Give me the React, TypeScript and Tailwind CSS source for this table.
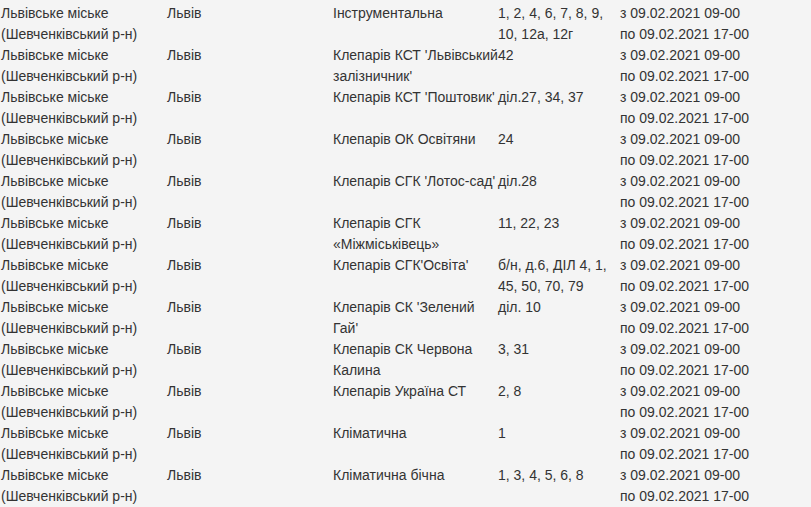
const ROW = { org: 'Львівське міське (Шевченківський р-н)', city: 'Львів' };

const STREETS: [string, string][] = [
  ['Інструментальна', '1, 2, 4, 6, 7, 8, 9, 10, 12а, 12г'],
  ["Клепарів КСТ 'Львівський залізничник'", '42'],
  ["Клепарів КСТ 'Поштовик'", 'діл.27, 34, 37'],
  ['Клепарів ОК Освітяни', '24'],
  ["Клепарів СГК 'Лотос-сад'", 'діл.28'],
  ['Клепарів СГК «Міжміськівець»', '11, 22, 23'],
  ["Клепарів СГК'Освіта'", 'б/н, д.6, ДІЛ 4, 1, 45, 50, 70, 79'],
  ["Клепарів СК 'Зелений Гай'", 'діл. 10'],
  ['Клепарів СК Червона Калина', '3, 31'],
  ['Клепарів Україна СТ', '2, 8'],
  ['Кліматична', '1'],
  ['Кліматична бічна', '1, 3, 4, 5, 6, 8'],
];

export default function App() {
  return (
    <div className="min-h-screen bg-[#f4f4f4] text-[#333] text-[14px] leading-[21px] font-['Liberation_Sans',Arial,sans-serif] overflow-hidden">
      <table className="table-fixed border-collapse ml-px mt-[3px]">
        <colgroup>
          <col className="w-[166px]" />
          <col className="w-[166px]" />
          <col className="w-[165px]" />
          <col className="w-[122px]" />
          <col className="w-[190px]" />
        </colgroup>
        <tbody>
          {STREETS.map(([street, houses], i) => (
            <tr key={i} className="align-top">
              <td className="p-0">{ROW.org}</td>
              <td className="p-0">{ROW.city}</td>
              <td className="p-0">{street}</td>
              <td className="p-0">{houses}</td>
              <td className="p-0 whitespace-nowrap">
                з 09.02.2021 09-00
                <br />
                по 09.02.2021 17-00
              </td>
            </tr>
          ))}
        </tbody>
      </table>
    </div>
  );
}
